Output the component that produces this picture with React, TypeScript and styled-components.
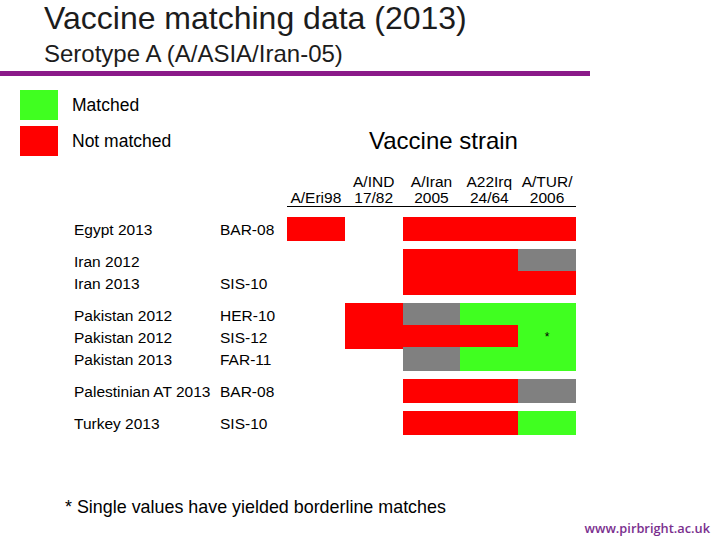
import { Fragment, type FC } from "react";
import styled, { createGlobalStyle } from "styled-components";

type Cell = "red" | "green" | "gray" | null;

const COLORS: Record<string, string> = {
  red: "#ff0000",
  green: "#40ff20",
  gray: "#808080",
};

const strains = [
  ["", "A/Eri98"],
  ["A/IND", "17/82"],
  ["A/Iran", "2005"],
  ["A22Irq", "24/64"],
  ["A/TUR/", "2006"],
];

const groups: { country: string; strain: string; cells: Cell[]; note?: number }[][] = [
  [{ country: "Egypt 2013", strain: "BAR-08", cells: ["red", null, "red", "red", "red"] }],
  [
    { country: "Iran 2012", strain: "", cells: [null, null, "red", "red", "gray"] },
    { country: "Iran 2013", strain: "SIS-10", cells: [null, null, "red", "red", "red"] },
  ],
  [
    { country: "Pakistan 2012", strain: "HER-10", cells: [null, "red", "gray", "green", "green"] },
    { country: "Pakistan 2012", strain: "SIS-12", cells: [null, "red", "red", "red", "green"], note: 4 },
    { country: "Pakistan 2013", strain: "FAR-11", cells: [null, null, "gray", "green", "green"] },
  ],
  [{ country: "Palestinian AT 2013", strain: "BAR-08", cells: [null, null, "red", "red", "gray"] }],
  [{ country: "Turkey 2013", strain: "SIS-10", cells: [null, null, "red", "red", "green"] }],
];

const GlobalStyle = createGlobalStyle`
  body {
    margin: 0;
    background: #ffffff;
  }
`;

const Slide = styled.div`
  width: 720px;
  height: 540px;
  display: flex;
  flex-direction: column;
  overflow: hidden;
  font-family: "Liberation Sans", Arial, sans-serif;
  color: #000;
`;

const Title = styled.h1`
  margin: 0 0 0 44px;
  font-size: 32px;
  line-height: 36px;
  font-weight: normal;
  color: #1c1c1c;
  white-space: nowrap;
`;

const Subtitle = styled.h2`
  margin: 4px 0 0 44px;
  font-size: 24px;
  line-height: 28px;
  font-weight: normal;
  color: #1c1c1c;
  white-space: nowrap;
`;

const Rule = styled.div`
  margin-top: 3px;
  width: 590px;
  height: 5px;
  background: #8b1a89;
`;

const TopArea = styled.div`
  display: grid;
  grid-template-columns: 349px auto;
  margin-top: 14px;
  padding-left: 20px;
`;

const Legend = styled.div`
  display: flex;
  flex-direction: column;
  gap: 6px;
`;

const LegendItem = styled.div`
  display: flex;
  align-items: center;
  gap: 14px;
  font-size: 17.5px;
`;

const Swatch = styled.span<{ $color: string }>`
  width: 38px;
  height: 30px;
  background: ${({ $color }) => $color};
`;

const Caption = styled.div`
  align-self: end;
  font-size: 24px;
  line-height: 28px;
  margin-bottom: 1px;
  white-space: nowrap;
`;

const Grid = styled.div`
  display: grid;
  grid-template-columns: 146px 67px repeat(5, 57.8px);
  margin-left: 74px;
  font-size: 15.5px;
`;

const Head = styled(Grid)`
  margin-top: 18px;
  line-height: 16px;
`;

const HeadCell = styled.div`
  text-align: center;
  white-space: nowrap;
  border-bottom: 1px solid #000;
`;

const Body = styled.div`
  display: flex;
  flex-direction: column;
  gap: 10px;
  margin-top: 10px;
`;

const Row = styled(Grid)`
  height: 22px;
  line-height: 22px;
`;

const Label = styled.div`
  padding-top: 2px;
  white-space: nowrap;
  overflow: visible;
`;

const Bar = styled.div<{ $color: Cell }>`
  background: ${({ $color }) => ($color ? COLORS[$color] : "transparent")};
  display: flex;
  align-items: center;
  justify-content: center;
  font-size: 12px;
`;

const Footnote = styled.div`
  margin: 64px 0 0 65px;
  font-size: 17.9px;
  line-height: 20px;
  white-space: nowrap;
`;

const Url = styled.div`
  margin-top: auto;
  align-self: flex-end;
  margin-right: 10px;
  padding-bottom: 4px;
  font-family: "Open Sans", "Noto Sans", sans-serif;
  font-weight: 600;
  font-size: 12.8px;
  line-height: 16px;
  color: #7a2f8e;
`;

const App: FC = () => {
  return (
    <Fragment>
      <GlobalStyle />
      <Slide>
        <Title>Vaccine matching data (2013)</Title>
        <Subtitle>Serotype A (A/ASIA/Iran-05)</Subtitle>
        <Rule />
        <TopArea>
          <Legend>
            <LegendItem>
              <Swatch $color={COLORS.green} />
              Matched
            </LegendItem>
            <LegendItem>
              <Swatch $color={COLORS.red} />
              Not matched
            </LegendItem>
          </Legend>
          <Caption>Vaccine strain</Caption>
        </TopArea>
        <Head>
          <div />
          <div />
          {strains.map((s, i) => (
            <HeadCell key={i}>
              {s[0] || "\u00a0"}
              <br />
              {s[1]}
            </HeadCell>
          ))}
        </Head>
        <Body>
          {groups.map((group, gi) => (
            <div key={gi}>
              {group.map((row, ri) => (
                <Row key={ri}>
                  <Label>{row.country}</Label>
                  <Label>{row.strain}</Label>
                  {row.cells.map((c, ci) => (
                    <Bar key={ci} $color={c}>
                      {row.note === ci ? "*" : null}
                    </Bar>
                  ))}
                </Row>
              ))}
            </div>
          ))}
        </Body>
        <Footnote>* Single values have yielded borderline matches</Footnote>
        <Url>www.pirbright.ac.uk</Url>
      </Slide>
    </Fragment>
  );
};

export default App;
